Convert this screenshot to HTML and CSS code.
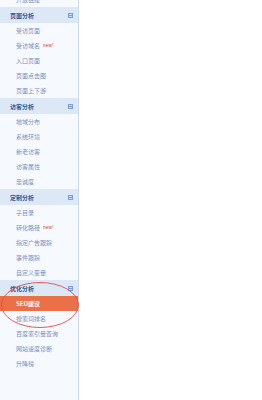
FILE: index.html
```html
<!DOCTYPE html>
<html>
  <head>
    <title>统计菜单</title>
    <link rel="stylesheet" href="styles.css">
  </head>
  <body>
    <div class="page">
      <div class="sidebar">
        <div class="menu">
          <ul class="items">
            <li><a href="">开放链接</a></li>
          </ul>

          <div class="group-title">页面分析<i class="fold"></i></div>
          <ul class="items">
            <li><a href="">受访页面</a></li>
            <li><a href="">受访域名</a><span class="new">new!</span></li>
            <li><a href="">入口页面</a></li>
            <li><a href="">页面点击图</a></li>
            <li><a href="">页面上下游</a></li>
          </ul>

          <div class="group-title">访客分析<i class="fold"></i></div>
          <ul class="items">
            <li><a href="">地域分布</a></li>
            <li><a href="">系统环境</a></li>
            <li><a href="">新老访客</a></li>
            <li><a href="">访客属性</a></li>
            <li><a href="">忠诚度</a></li>
          </ul>

          <div class="group-title">定制分析<i class="fold"></i></div>
          <ul class="items">
            <li><a href="">子目录</a></li>
            <li><a href="">转化路径</a><span class="new">new!</span></li>
            <li><a href="">指定广告跟踪</a></li>
            <li><a href="">事件跟踪</a></li>
            <li><a href="">自定义变量</a></li>
          </ul>

          <div class="group-title">优化分析<i class="fold"></i></div>
          <ul class="items">
            <li class="active"><a href="">SEO建议</a></li>
            <li><a href="">搜索词排名</a></li>
            <li><a href="">百度索引量查询</a></li>
            <li><a href="">网站速度诊断</a></li>
            <li><a href="">升降榜</a></li>
          </ul>
        </div>

        <!-- red circle drawn over the screenshot -->
        <svg class="mark" width="90" height="60" viewBox="0 0 90 60">
          <ellipse cx="40" cy="27" rx="38.5" ry="22.5" fill="none" stroke="#e8474a" stroke-width="0.9"/>
        </svg>
      </div>
      <div class="main"></div>
    </div>
  </body>
</html>
```

FILE: styles.css
```css
* {
  margin: 0;
  padding: 0;
  box-sizing: border-box;
}

body {
  background-color: #fff;
  font-family: "Noto Sans CJK SC", "Noto Sans", sans-serif;
}

.page {
  display: flex;
  height: 400px;
  overflow: hidden;
}

.sidebar {
  position: relative;
  width: 79px;
  flex-shrink: 0;
  background-color: #f6f9fe;
  border-right: 1px solid #c9dbf4;
}

.menu {
  margin-top: -8px;
}

.items {
  list-style: none;
}

.items li {
  display: flex;
  align-items: center;
  height: 15px;
  padding-left: 16px;
}

.items a {
  color: #7391c4;
  font-size: 6px;
  text-decoration: none;
}

.items .new {
  color: #d8343a;
  font-family: "Liberation Sans", sans-serif;
  font-size: 4.5px;
  margin-left: 3px;
  letter-spacing: 0.3px;
}

.items li.active {
  background-color: #ea7147;
}

.items li.active a {
  color: #fff;
  font-weight: bold;
}

.group-title {
  display: flex;
  align-items: center;
  justify-content: space-between;
  height: 16px;
  padding: 0 5px 0 10px;
  background-color: #dde8f7;
  color: #2e5896;
  font-size: 6px;
  font-weight: bold;
}

.fold {
  position: relative;
  width: 5px;
  height: 5px;
  border: 1px solid #7aa1d6;
  background-color: #c7daf2;
}

.fold::after {
  content: "";
  position: absolute;
  left: 0;
  top: 1px;
  width: 3px;
  height: 1px;
  background-color: #7aa1d6;
}

.mark {
  position: absolute;
  left: 0;
  top: 278px;
}

.main {
  flex: 1;
  background-color: #fff;
}
```
